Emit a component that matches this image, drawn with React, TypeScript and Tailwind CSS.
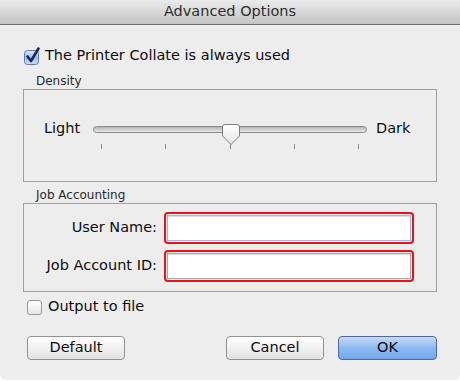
import React from 'react';

const Checked = () => (
  <svg width="18" height="18" viewBox="0 0 18 18">
    <defs>
      <linearGradient id="cbBlue" x1="0" y1="0" x2="0" y2="1">
        <stop offset="0" stopColor="#dbe8fa" />
        <stop offset="0.5" stopColor="#9fc0ee" />
        <stop offset="1" stopColor="#c9ddf8" />
      </linearGradient>
    </defs>
    <rect x="1.5" y="3.5" width="14" height="14" rx="3" fill="url(#cbBlue)" stroke="#5d7bb0" />
    <path d="M4.5 9.5 L8 14 L15.5 1.5" fill="none" stroke="#1b2757" strokeWidth="2.6" strokeLinecap="round" strokeLinejoin="round" />
  </svg>
);

const Thumb = () => (
  <svg width="20" height="23" viewBox="0 0 20 23">
    <defs>
      <linearGradient id="thumbG" x1="0" y1="0" x2="0" y2="1">
        <stop offset="0" stopColor="#ffffff" />
        <stop offset="1" stopColor="#e4e4e4" />
      </linearGradient>
    </defs>
    <path d="M1.5 4 Q1.5 1.5 4 1.5 H16 Q18.5 1.5 18.5 4 V13 L10 21.5 L1.5 13 Z" fill="url(#thumbG)" stroke="#7f7f7f" />
  </svg>
);

const Group = ({ label, className, children }: { label: string; className: string; children: React.ReactNode }) => (
  <div className={`relative border border-[#a0a0a0] ${className}`}>
    <div className="absolute left-[8px] -top-[16px] px-[4px] bg-[#ededed] text-[12px] leading-[14px] text-[#2a2a2a]">
      {label}
    </div>
    {children}
  </div>
);

const Field = ({ focused }: { focused?: boolean }) => (
  <div className="h-[32px] rounded-[4px] border-2 border-[#e3141c] p-[1px]">
    <div
      className={`h-full w-full bg-white border shadow-[inset_0_1px_1px_rgba(0,0,0,0.15)] ${
        focused ? 'border-[#9cb8dc]' : 'border-[#a9a9a9]'
      }`}
    />
  </div>
);

export default function App() {
  return (
    <div className="w-[460px] h-[382px] bg-white font-['DejaVu_Sans',sans-serif] text-[#0d0d0d]">
      <div className="h-[380px] bg-[#ededed] rounded-b-[6px] flex flex-col">
        <div className="h-[25px] border-b border-[#6e6e6e] bg-linear-to-b from-[#ebebeb] to-[#c4c4c4] flex items-center justify-center text-[14.5px] text-[#2e2e2e]">
          Advanced Options
        </div>

        <div className="px-[23px] pt-[22px] flex flex-col">
          <div className="h-[18px] flex items-center gap-[4px] text-[14.5px]">
            <Checked />
            <span>The Printer Collate is always used</span>
          </div>

          <Group label="Density" className="mt-[24px] h-[93px]">
            <div className="pt-[30px] pl-[20px] flex items-center h-[48px] text-[14.5px]">
              <span className="w-[37px]">Light</span>
              <div className="relative ml-[12px] w-[274px] h-[7px] rounded-full border border-[#8c8c8c] bg-linear-to-b from-[#b4b4b4] to-[#e8e8e8]">
                <div className="absolute left-[127px] -top-[4px]">
                  <Thumb />
                </div>
                <div className="absolute left-[7px] right-[7px] top-[17px] flex justify-between">
                  {[0, 1, 2, 3, 4].map((i) => (
                    <div key={i} className="w-px h-[5px] bg-[#8a8a8a]" />
                  ))}
                </div>
              </div>
              <span className="ml-[9px]">Dark</span>
            </div>
          </Group>

          <Group label="Job Accounting" className="mt-[21px] h-[89px]">
            <div className="pt-[8px] grid grid-cols-[133px_250px] gap-x-[7px] gap-y-[6px] items-center text-[14.5px]">
              <span className="text-right">User Name:</span>
              <Field focused />
              <span className="text-right">Job Account ID:</span>
              <Field />
            </div>
          </Group>

          <div className="mt-[6px] pl-[4px] h-[18px] flex items-center gap-[6px] text-[14.5px]">
            <div className="w-[15px] h-[15px] rounded-[3px] border border-[#9a9a9a] bg-linear-to-b from-white to-[#e6e6e6]" />
            <span>Output to file</span>
          </div>

          <div className="mt-[20px] pl-[4px] flex text-[14.5px]">
            <button className="w-[98px] h-[24px] rounded-[4px] border border-[#929292] bg-linear-to-b from-white to-[#e2e2e2] flex items-center justify-center">
              Default
            </button>
            <div className="flex-1" />
            <button className="w-[98px] h-[24px] rounded-[4px] border border-[#929292] bg-linear-to-b from-white to-[#e2e2e2] flex items-center justify-center">
              Cancel
            </button>
            <button className="ml-[14px] w-[99px] h-[24px] rounded-[4px] border border-[#4f66a0] bg-linear-to-b from-[#c6dcf8] via-[#8db9f0] to-[#73a9ec] flex items-center justify-center">
              OK
            </button>
          </div>
        </div>
      </div>
    </div>
  );
}
